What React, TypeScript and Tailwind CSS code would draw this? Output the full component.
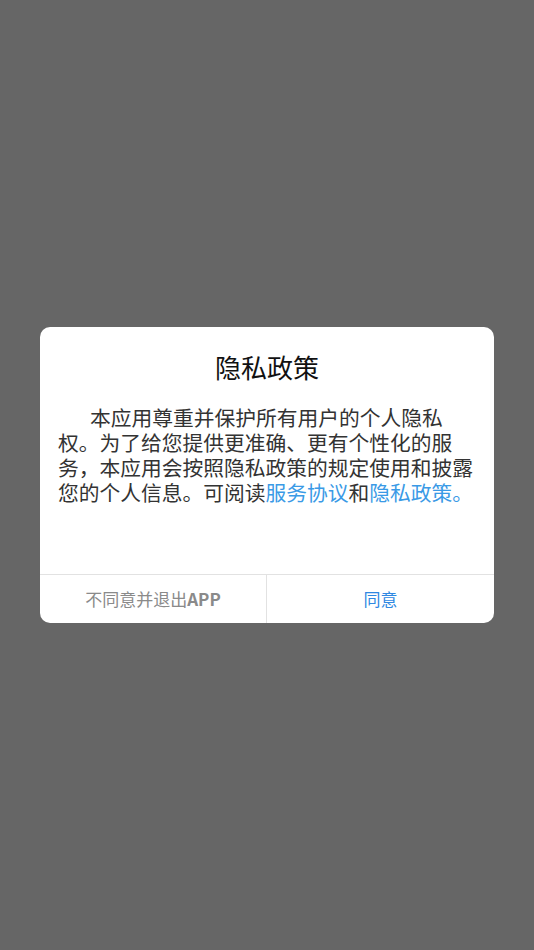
export default function App() {
  return (
    <div
      className="flex h-[950px] w-full items-center justify-center bg-[#666666] px-[40px]"
      style={{ fontFamily: '"Noto Sans CJK SC", "Noto Sans", sans-serif' }}
    >
      <div className="-mt-[1px] w-[454px] overflow-hidden rounded-[10px] bg-white">
        <div className="px-[18px] pb-[69px] pt-[25px]">
          <h2 className="text-center text-[26px] leading-[30px] text-[#111111]">隐私政策</h2>
          <p className="mt-[23px] indent-[32px] text-[20.75px] leading-[25px] text-[#333333]">
            本应用尊重并保护所有用户的个人隐私权。为了给您提供更准确、更有个性化的服务，本应用会按照隐私政策的规定使用和披露您的个人信息。可阅读
            <span className="text-[#3a9ae6]">服务协议</span>和
            <span className="text-[#3a9ae6]">隐私政策。</span>
          </p>
        </div>
        <div className="grid h-[49px] grid-cols-2 border-t border-[#e2e2e2]">
          <button className="flex items-center justify-center border-r border-[#e2e2e2] text-[17px] text-[#8a8a8a]">
            不同意并退出<span className="font-bold">APP</span>
          </button>
          <button className="flex items-center justify-center text-[17px] text-[#2f88e2]">同意</button>
        </div>
      </div>
    </div>
  );
}
